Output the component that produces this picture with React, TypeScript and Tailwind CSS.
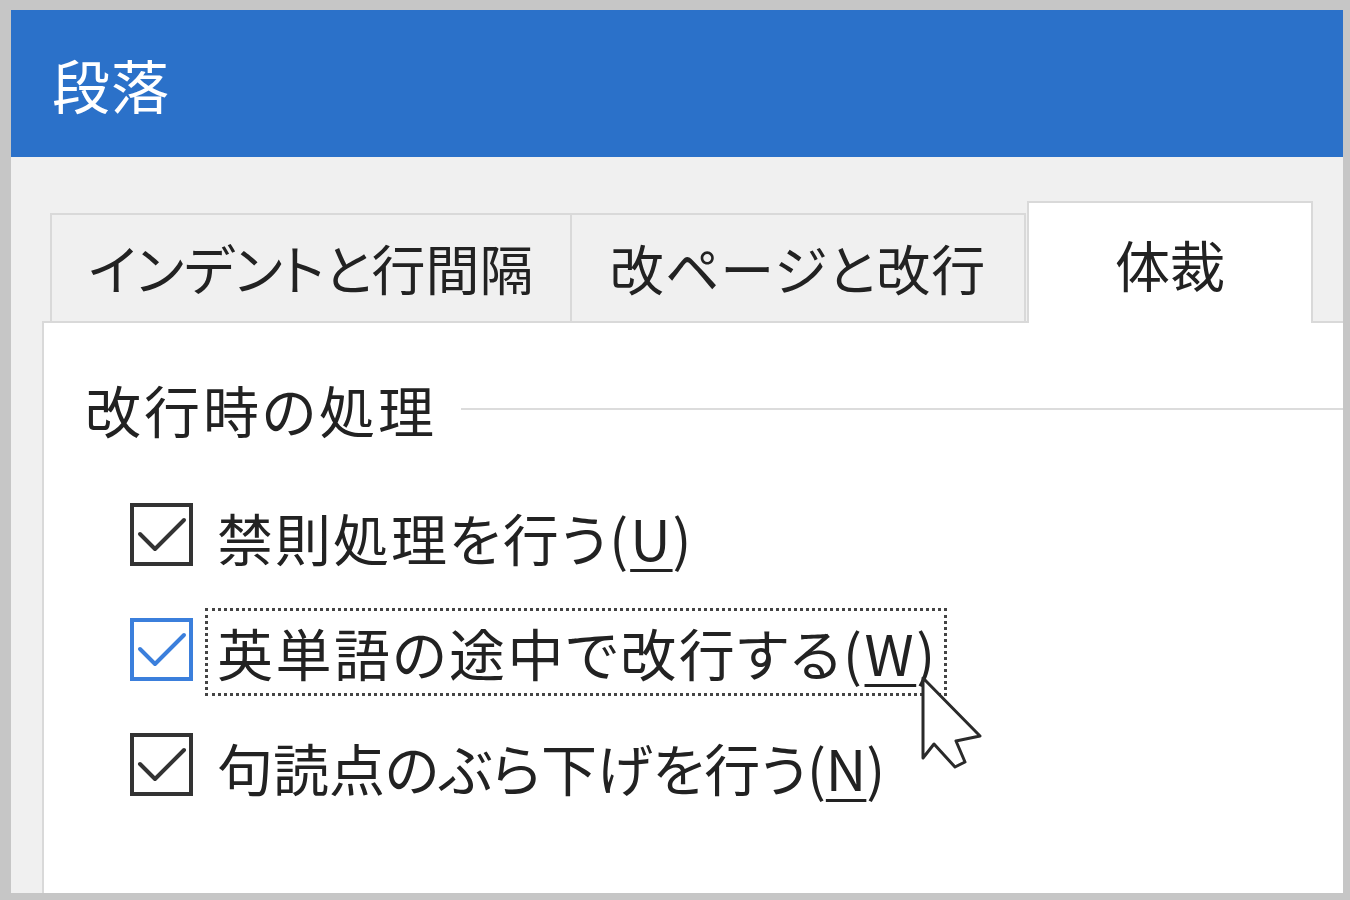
import React from "react";

const FONT = {
  fontFamily: '"Noto Sans CJK JP", "Noto Sans", sans-serif',
};

function Check({ blue = false }: { blue?: boolean }) {
  const c = blue ? "#3b7fdc" : "#333333";
  return (
    <div
      className={`w-[63px] h-[63px] shrink-0 bg-white border-[4px] ${
        blue ? "border-[#3b7fdc]" : "border-[#333333]"
      } flex items-center justify-center`}
    >
      <svg width="63" height="63" viewBox="0 0 63 63" className="-m-[4px]">
        <polyline
          points="10,31 25,46 54,17"
          fill="none"
          stroke={c}
          strokeWidth="4"
          strokeLinecap="round"
          strokeLinejoin="round"
        />
      </svg>
    </div>
  );
}

function Row({
  label,
  accel,
  focused = false,
  blue = false,
  track,
}: {
  label: string;
  accel: string;
  focused?: boolean;
  blue?: boolean;
  track: string;
}) {
  return (
    <div className="flex items-center gap-[12px] h-[85px]">
      <Check blue={blue} />
      <div
        className={`h-[88px] mt-[4px] flex items-center pl-[9px] pr-[6px] border-[3px] border-dotted ${
          focused ? "border-[#444444]" : "border-transparent"
        }`}
      >
        <span
          className={`text-[56px] leading-none text-[#222222] whitespace-nowrap ${track}`}
        >
          {label}(
          <span className="underline decoration-[3px] underline-offset-[8px]">
            {accel}
          </span>
          )
        </span>
      </div>
    </div>
  );
}

export default function App() {
  return (
    <div
      className="relative w-[1350px] h-[900px] bg-[#c6c6c6] pt-[10px] pl-[11px] pr-[7px] pb-[7px] flex flex-col overflow-hidden [font-feature-settings:'palt']"
      style={FONT}
    >
      <div className="flex flex-col flex-1 bg-[#f0f0f0]">
        <div className="h-[147px] shrink-0 bg-[#2b71c9] flex items-center pl-[41px]">
          <span className="text-white text-[58px] leading-none tracking-[1px]">段落</span>
        </div>
        <div className="flex-1 flex flex-col pl-[31px] pt-[44px]">
          <div className="flex items-end pl-[8px]">
            <div className="w-[522px] h-[108px] border-t-2 border-l-2 border-r-2 border-[#d9d9d9] bg-[#f0f0f0] flex items-center justify-center">
              <span className="text-[54px] leading-none text-[#222222] whitespace-nowrap">
                インデントと行間隔
              </span>
            </div>
            <div className="w-[454px] h-[108px] border-t-2 border-r-2 border-[#d9d9d9] bg-[#f0f0f0] flex items-center justify-center">
              <span className="text-[54px] leading-none text-[#222222] whitespace-nowrap tracking-[1px]">
                改ページと改行
              </span>
            </div>
            <div className="relative z-10 ml-[1px] -mb-[2px] w-[286px] h-[122px] border-t-2 border-l-2 border-r-2 border-[#d9d9d9] bg-white flex items-center justify-center">
              <span className="text-[55px] leading-none text-[#222222] whitespace-nowrap">
                体裁
              </span>
            </div>
          </div>
          <div className="flex-1 bg-white border-l-2 border-t-2 border-[#d9d9d9] pl-[41px] pt-[58px]">
            <div className="flex items-center">
              <span className="text-[56px] leading-none text-[#222222] whitespace-nowrap tracking-[3px]">
                改行時の処理
              </span>
              <div className="flex-1 h-[2px] bg-[#dcdcdc] ml-[24px]" />
            </div>
            <div className="flex flex-col gap-[30px] pl-[45px] mt-[55px]">
              <Row label="禁則処理を行う" accel="U" track="tracking-[2px]" />
              <Row
                label="英単語の途中で改行する"
                accel="W"
                focused
                blue
                track="tracking-[2.5px]"
              />
              <Row label="句読点のぶら下げを行う" accel="N" track="tracking-[0px]" />
            </div>
          </div>
        </div>
      </div>
      <svg
        className="absolute left-[921px] top-[676px]"
        width="64"
        height="96"
        viewBox="-2 -2 64 96"
      >
        <polygon
          points="0,0 0,80 11,66 32,89 42,84 33,63 57,58"
          fill="white"
          stroke="#2a2a2a"
          strokeWidth="3"
          strokeLinejoin="round"
        />
      </svg>
    </div>
  );
}
